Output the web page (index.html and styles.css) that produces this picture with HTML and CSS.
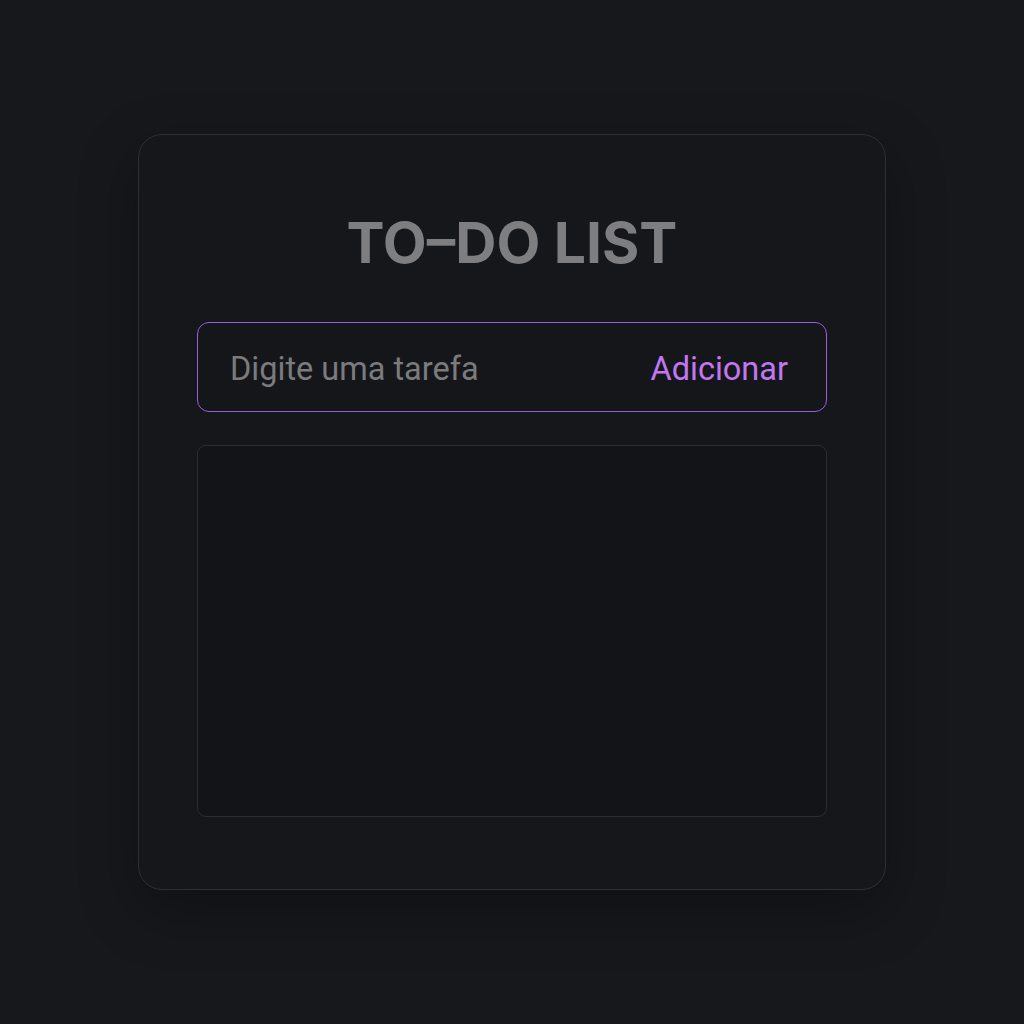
FILE: index.html
```html
<!DOCTYPE html>
<html lang="pt-BR">
<head>
<meta charset="utf-8">
<title>To-Do List</title>
<link rel="stylesheet" href="styles.css">
</head>
<body>
<main class="page">
  <section class="card">
    <h1 class="title">TO–DO LIST</h1>
    <form class="add-form">
      <input class="task-input" type="text" placeholder="Digite uma tarefa">
      <button class="add-btn" type="button">Adicionar</button>
    </form>
    <ul class="task-list"></ul>
  </section>
</main>
</body>
</html>
```
FILE: styles.css
```css
* { box-sizing: border-box; }
html, body {
  margin: 0;
  height: 100%;
  background: #17181c;
  font-family: Roboto, "Liberation Sans", sans-serif;
}
.page {
  height: 1024px;
  display: flex;
  justify-content: center;
  padding-top: 134px;
}
.card {
  width: 748px;
  height: 756px;
  background: #16171b;
  border: 1px solid #2f3036;
  border-radius: 24px;
  box-shadow: 0 20px 60px rgba(0,0,0,0.3);
  padding: 77px 58px 72px 58px;
  display: flex;
  flex-direction: column;
}
.title {
  margin: 0;
  text-align: center;
  font-family: Inter, Roboto, "Liberation Sans", sans-serif;
  font-size: 57px;
  font-weight: 700;
  color: #7e7e80;
  line-height: 62px;
  letter-spacing: 0;
}
.add-form {
  margin-top: 48px;
  height: 90px;
  border: 1.5px solid #9b5de5;
  border-radius: 12px;
  display: flex;
  align-items: center;
  padding: 3px 38px 0 32px;
  background: #15161a;
}
.task-input {
  flex: 1;
  min-width: 0;
  background: transparent;
  border: none;
  outline: none;
  font-family: Roboto, "Liberation Sans", sans-serif;
  font-size: 32.5px;
  color: #cfcfcf;
  padding: 0;
}
.task-input::placeholder { color: #7b7b7d; }
.add-btn {
  background: transparent;
  border: none;
  padding: 0;
  font-family: Roboto, "Liberation Sans", sans-serif;
  font-size: 32.5px;
  color: #c077f0;
  cursor: pointer;
}
.task-list {
  list-style: none;
  margin: 33px 0 0 0;
  padding: 0;
  flex: 1;
  background: #131418;
  border: 1px solid #2c2d33;
  border-radius: 9px;
}
```
